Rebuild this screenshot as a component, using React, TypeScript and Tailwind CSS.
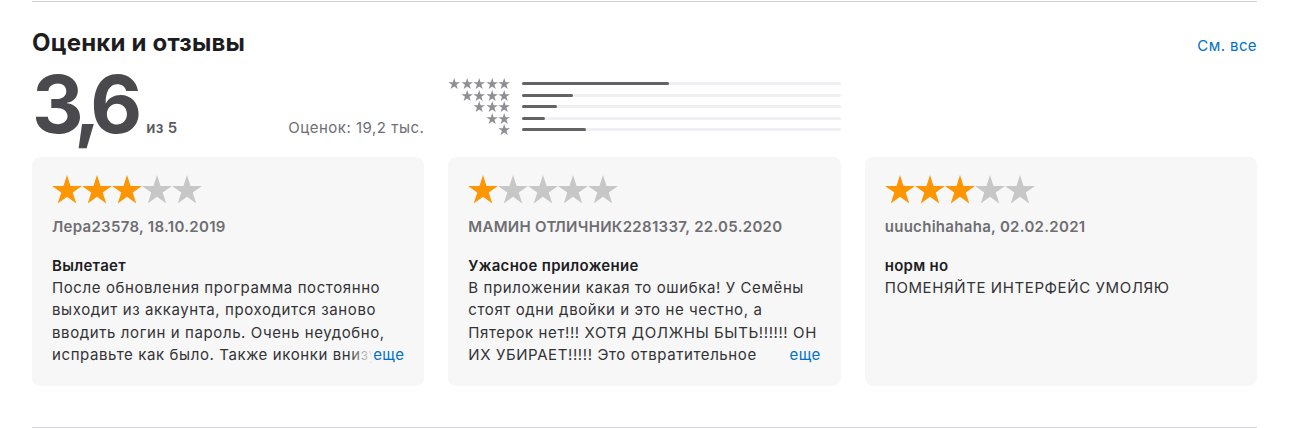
import React from "react";

type Review = {
  rating: number;
  author: string;
  date: string;
  title: string;
  body: string;
  more: boolean;
};

const reviews: Review[] = [
  {
    rating: 3,
    author: "Лера23578",
    date: "18.10.2019",
    title: "Вылетает",
    body: "После обновления программа постоянно выходит из аккаунта, проходится заново вводить логин и пароль. Очень неудобно, исправьте как было. Также иконки внизу пропали и найти ничего невозможно.",
    more: true,
  },
  {
    rating: 1,
    author: "МАМИН ОТЛИЧНИК2281337",
    date: "22.05.2020",
    title: "Ужасное приложение",
    body: "В приложении какая то ошибка! У Семёны стоят одни двойки и это не честно, а Пятерок нет!!! ХОТЯ ДОЛЖНЫ БЫТЬ!!!!!! ОН ИХ УБИРАЕТ!!!!! Это отвратительное приложение, верните как было!!!",
    more: true,
  },
  {
    rating: 3,
    author: "uuuchihahaha",
    date: "02.02.2021",
    title: "норм но",
    body: "ПОМЕНЯЙТЕ ИНТЕРФЕЙС УМОЛЯЮ",
    more: false,
  },
];

const histogram = [
  { stars: 5, pct: 46 },
  { stars: 4, pct: 16 },
  { stars: 3, pct: 11 },
  { stars: 2, pct: 7 },
  { stars: 1, pct: 20 },
];

const STAR = "M9.51 0 L11.76 6.91 L19.02 6.91 L13.14 11.18 L15.39 18.09 L9.51 13.82 L3.63 18.09 L5.88 11.18 L0 6.91 L7.27 6.91 Z";

function Star({ className }: { className: string }) {
  return (
    <svg viewBox="0 0 19.02 18.09" className={className}>
      <path d={STAR} fill="currentColor" />
    </svg>
  );
}

function ReviewCard({ review }: { review: Review }) {
  return (
    <div className="flex h-[229px] flex-col rounded-lg bg-[#f7f7f7] px-5 pt-[18px]">
      <div className="flex">
        {[1, 2, 3, 4, 5].map((i) => (
          <Star
            key={i}
            className={
              "h-[28.5px] w-[30px] " + (i <= review.rating ? "text-[#ff9500]" : "text-[#c7c7c7]")
            }
          />
        ))}
      </div>
      <div className="mt-[13px] text-[15px] font-semibold leading-5 tracking-[0.3px] text-[#6e6e73]">
        {review.author}, {review.date}
      </div>
      <div className="mt-[18px] text-[15px] font-semibold leading-[22px] tracking-[0.3px] text-[#1d1d1f]">
        {review.title}
      </div>
      <div className="relative">
        <p className="max-h-[90px] overflow-hidden text-[15px] leading-[22.5px] tracking-[0.6px] text-[#333336]">
          {review.body}
        </p>
        {review.more ? (
          <div className="absolute bottom-0 right-0 flex h-[22.5px] items-center">
            <div className="h-full w-6 bg-gradient-to-r from-[#f7f7f7]/0 to-[#f7f7f7]" />
            <span className="bg-[#f7f7f7] text-[15px] leading-[22.5px] tracking-[0.4px] text-[#0070c9]">
              еще
            </span>
          </div>
        ) : null}
      </div>
    </div>
  );
}

export default function App() {
  return (
    <div className="min-h-[428px] bg-white font-['Inter',sans-serif] text-[#1d1d1f]">
      <section className="ml-8 mt-px w-[1225px] border-t border-[#d2d2d7] pt-[26px]">
        <div className="flex items-baseline justify-between">
          <h2 className="text-[24px] font-bold leading-[30px] tracking-[0.2px] text-[#1d1d1f]">
            Оценки и отзывы
          </h2>
          <a className="text-[15px] tracking-[0.4px] text-[#0070c9]" href="#">
            См. все
          </a>
        </div>

        <div className="mt-[6px] grid grid-cols-3 gap-6">
          <div className="flex items-baseline justify-between">
            <div className="flex items-baseline">
              <span className="text-[80px] font-bold leading-[80px] tracking-[-8px] text-[#4a4a4e]">
                3,6
              </span>
              <span className="ml-3 text-[15px] font-semibold tracking-[0.3px] text-[#5a5a5e]">
                из 5
              </span>
            </div>
            <span className="text-[15px] tracking-[0.5px] text-[#6e6e73]">Оценок: 19,2 тыс.</span>
          </div>

          <div className="mt-[14px] flex flex-col">
            {histogram.map((row) => (
              <div key={row.stars} className="flex h-[11.5px] items-center gap-3">
                <div className="flex w-[62px] justify-end">
                  {Array.from({ length: row.stars }).map((_, i) => (
                    <Star key={i} className="h-[11px] w-[12.4px] text-[#8e8e93]" />
                  ))}
                </div>
                <div className="h-[3px] flex-1 rounded-full bg-[#efeff4]">
                  <div className="h-full rounded-full bg-[#636366]" style={{ width: `${row.pct}%` }} />
                </div>
              </div>
            ))}
          </div>
        </div>

        <div className="mt-[13px] grid grid-cols-3 gap-6">
          {reviews.map((r) => (
            <ReviewCard key={r.author} review={r} />
          ))}
        </div>

        <div className="mt-[41px] border-t border-[#d2d2d7]" />
      </section>
    </div>
  );
}
